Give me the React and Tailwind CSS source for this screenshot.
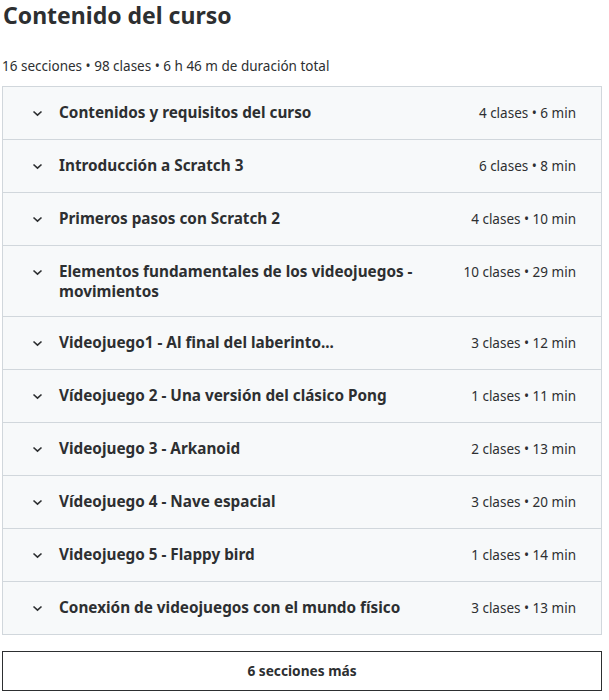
const sections = [
  { title: "Contenidos y requisitos del curso", meta: "4 clases • 6 min" },
  { title: "Introducción a Scratch 3", meta: "6 clases • 8 min" },
  { title: "Primeros pasos con Scratch 2", meta: "4 clases • 10 min" },
  { title: "Elementos fundamentales de los videojuegos - movimientos", meta: "10 clases • 29 min" },
  { title: "Videojuego1 - Al final del laberinto...", meta: "3 clases • 12 min" },
  { title: "Vídeojuego 2 - Una versión del clásico Pong", meta: "1 clases • 11 min" },
  { title: "Videojuego 3 - Arkanoid", meta: "2 clases • 13 min" },
  { title: "Vídeojuego 4 - Nave espacial", meta: "3 clases • 20 min" },
  { title: "Videojuego 5 - Flappy bird", meta: "1 clases • 14 min" },
  { title: "Conexión de videojuegos con el mundo físico", meta: "3 clases • 13 min" },
];

function Chevron() {
  return (
    <svg width="11" height="10" viewBox="0 0 11 10" className="shrink-0 mt-[6px]">
      <path d="M1.5 3.5 L5.5 7.2 L9.5 3.5" fill="none" stroke="#2d2f31" strokeWidth="1.6" />
    </svg>
  );
}

export default function App() {
  return (
    <div className="w-[609px] bg-white text-[#2d2f31] font-['Noto_Sans',sans-serif] pl-[2px] pr-[7px]">
      <h2 className="text-[23px] font-bold leading-[30px] pl-[1px]">Contenido del curso</h2>
      <div className="text-[13.5px] leading-[20px] mt-[26px] mb-[10px]">
        16 secciones • 98 clases • 6 h 46 m de duración total
      </div>
      <div className="border border-[#d1d7dc]">
        {sections.map((s, i) => (
          <div
            key={i}
            className={
              "flex items-start bg-[#f7f9fa] pl-[29px] pr-[25px] py-[15px] " +
              (i > 0 ? "border-t border-[#d1d7dc]" : "")
            }
          >
            <Chevron />
            <div className="ml-[16px] flex-1 pr-[40px] text-[15.3px] font-bold leading-[20px]">{s.title}</div>
            <div className="text-[13.5px] leading-[22px] whitespace-nowrap">{s.meta}</div>
          </div>
        ))}
      </div>
      <button className="mt-[16px] w-full h-[40px] border border-[#2d2f31] text-[13.7px] font-bold">
        6 secciones más
      </button>
    </div>
  );
}
